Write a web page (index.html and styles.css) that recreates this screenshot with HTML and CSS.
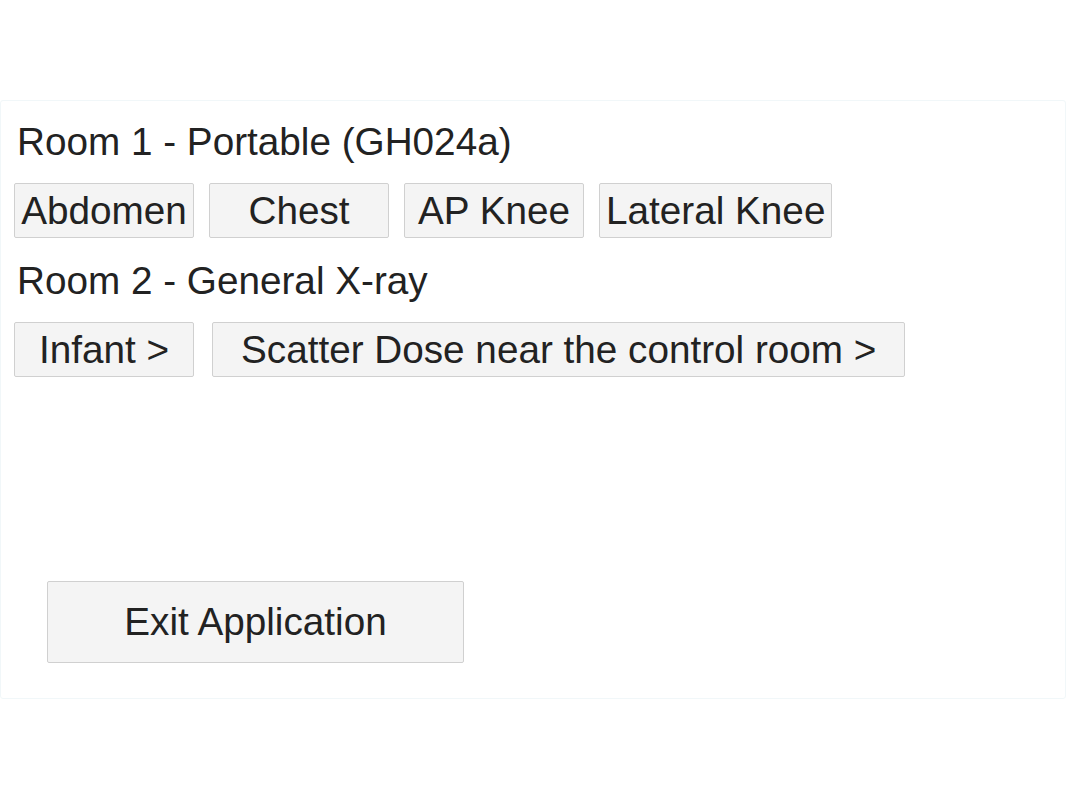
FILE: index.html
```html
<!DOCTYPE html>
<html lang="en">
<head>
    <meta charset="UTF-8" />
    <meta name="viewport" content="width=device-width, initial-scale=1.0"/>
    <title>X-ray Dose</title>
    <link rel="stylesheet" href="styles.css">
</head>
<body>

<div class="container">
    <div class="room">
        <h2>Room 1 - Portable (GH024a)</h2>
        <div class="btn-row">
            <button class="btn">Abdomen</button>
            <button class="btn">Chest</button>
            <button class="btn">AP Knee</button>
            <button class="btn">Lateral Knee</button>
        </div>
    </div>

    <div class="room">
        <h2>Room 2 - General X-ray</h2>
        <div class="btn-row row-wide">
            <button class="btn">Infant &gt;</button>
            <button class="btn btn-long">Scatter Dose near the control room &gt;</button>
        </div>
    </div>

    <div class="exit-box">
        <button class="btn btn-exit">Exit Application</button>
    </div>
</div>

</body>
</html>
```

FILE: styles.css
```css
body {
    font-family: "Liberation Sans", Arial, sans-serif;
    color: #222;
    background: #fff;
    margin: 0;
    padding: 100px 2px 0 0;
}
.container {
    border: 1px solid #f1f7f9;
    border-radius: 3px;
    height: 578px;
    padding: 19px 13px 0 13px;
}
h2 {
    font-size: 38.7px;
    font-weight: normal;
    line-height: 44px;
    margin: 0 0 19px 3px;
}
.room {
    margin-bottom: 21px;
}
.btn-row {
    display: flex;
    gap: 15px;
}
.row-wide {
    gap: 18px;
}
.btn {
    font-family: inherit;
    font-size: 38.7px;
    line-height: 44px;
    color: #222;
    background: #f4f4f4;
    border: 1px solid #d0d0d0;
    border-radius: 2px;
    min-width: 180px;
    height: 55px;
    padding: 0 6px;
    cursor: pointer;
}
.btn-long {
    padding: 0 28px;
}
.exit-box {
    padding: 183px 0 0 33px;
}
.btn-exit {
    width: 417px;
    height: 82px;
}
```
